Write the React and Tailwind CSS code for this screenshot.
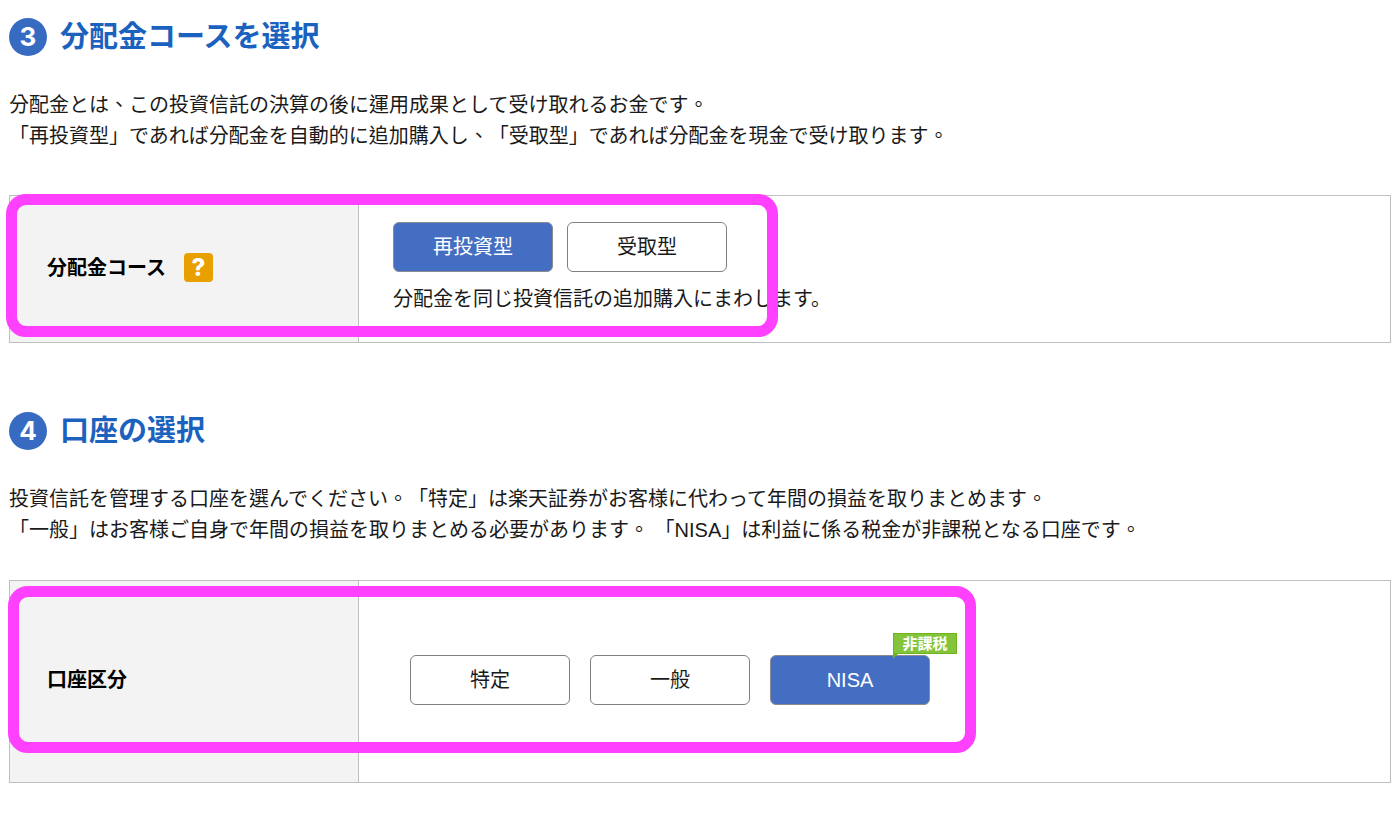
import React, { useState } from "react";

const jpFont = "font-['Liberation_Sans','Noto_Sans_CJK_JP',sans-serif]";
const tcFont = "font-['Liberation_Sans','Noto_Sans_CJK_TC',sans-serif]";

const StepHeading = ({ number, title }) => (
  <div className="flex items-center gap-[13px]">
    <span className="flex size-[38px] shrink-0 items-center justify-center rounded-full bg-[#376bc2] font-['Inter',sans-serif] text-[26px] font-bold leading-none text-white">
      {number}
    </span>
    <h2 className="text-[29px] leading-[38px] font-bold text-[#1b62bf]">{title}</h2>
  </div>
);

const Description = ({ children }) => (
  <p className={`mt-[34px] text-xl leading-[31px] [text-spacing-trim:space-all] ${tcFont}`}>
    {children}
  </p>
);

const OptionButton = ({ label, selected, onClick }) => (
  <button
    type="button"
    aria-pressed={selected}
    onClick={onClick}
    className={`h-[50px] w-40 rounded-md border text-xl cursor-pointer ${
      selected
        ? "border-[#8c8c90] bg-[#436ec2] text-white"
        : "border-[#808080] bg-white text-[#1a1a1a]"
    }`}
  >
    {label}
  </button>
);

const TaxFreeBadge = () => (
  <span className="absolute -top-[22px] left-[123px] h-[21px] w-16 border border-[#6fb41c] bg-[#84c43b] text-center text-[15px] leading-[19px] font-bold text-white">
    非課税
    <svg
      className="absolute -left-px top-[19px]"
      width="6"
      height="6"
      viewBox="0 0 6 6"
      aria-hidden="true"
    >
      <path d="M0 0H6L0 6Z" fill="#6fb41c" />
    </svg>
  </span>
);

const App = () => {
  const [course, setCourse] = useState("再投資型");
  const [account, setAccount] = useState("NISA");

  return (
    <main className={`px-[9px] pt-[18px] pb-8 text-[#1a1a1a] ${jpFont}`}>
      {/* Step 3 */}
      <section>
        <StepHeading number="3" title="分配金コースを選択" />
        <Description>
          分配金とは、この投資信託の決算の後に運用成果として受け取れるお金です。
          <br />
          「再投資型」であれば分配金を自動的に追加購入し、「受取型」であれば分配金を現金で受け取ります。
        </Description>

        <div className="relative mt-[43px]">
          <table className="w-full border-collapse border border-[#bfbfbf]">
            <tbody>
              <tr>
                <th
                  scope="row"
                  className="w-[349px] border-r border-[#bfbfbf] bg-[#f3f3f3] pb-[3px] pl-[37px] text-left text-xl font-bold text-black"
                >
                  <div className="flex items-center gap-[18px]">
                    分配金コース
                    <button
                      type="button"
                      className="flex size-[29px] items-center justify-center rounded-[4px] bg-[#e8a000] font-['Inter',sans-serif] text-2xl font-extrabold leading-none text-white cursor-pointer"
                    >
                      ?
                    </button>
                  </div>
                </th>
                <td className="pt-[26px] pr-8 pb-7 pl-[34px]">
                  <div className="flex flex-wrap gap-[14px]">
                    {["再投資型", "受取型"].map((label) => (
                      <OptionButton
                        key={label}
                        label={label}
                        selected={course === label}
                        onClick={() => setCourse(label)}
                      />
                    ))}
                  </div>
                  <p className="mt-3 text-xl leading-[30px]">
                    分配金を同じ投資信託の追加購入にまわします。
                  </p>
                </td>
              </tr>
            </tbody>
          </table>
          <div className="pointer-events-none absolute -top-px -left-[3px] h-[143px] w-[772px] rounded-[20px] border-[11px] border-[#ff40ff]" />
        </div>
      </section>

      {/* Step 4 */}
      <section className="mt-[69px]">
        <StepHeading number="4" title="口座の選択" />
        <Description>
          投資信託を管理する口座を選んでください。「特定」は楽天証券がお客様に代わって年間の損益を取りまとめます。
          <br />
          「一般」はお客様ご自身で年間の損益を取りまとめる必要があります。 「NISA」は利益に係る税金が非課税となる口座です。
        </Description>

        <div className="relative mt-[34px]">
          <table className="w-full border-collapse border border-[#bfbfbf]">
            <tbody>
              <tr>
                <th
                  scope="row"
                  className="w-[349px] border-r border-[#bfbfbf] bg-[#f3f3f3] pb-[3px] pl-[37px] text-left text-xl font-bold text-black"
                >
                  口座区分
                </th>
                <td className="pt-[74px] pr-8 pb-[77px] pl-[51px]">
                  <div className="flex flex-wrap gap-5">
                    {["特定", "一般", "NISA"].map((label) => (
                      <div key={label} className="relative">
                        <OptionButton
                          label={label}
                          selected={account === label}
                          onClick={() => setAccount(label)}
                        />
                        {label === "NISA" && <TaxFreeBadge />}
                      </div>
                    ))}
                  </div>
                </td>
              </tr>
            </tbody>
          </table>
          <div className="pointer-events-none absolute top-[6px] -left-px h-[167px] w-[968px] rounded-[20px] border-[11px] border-[#ff40ff]" />
        </div>
      </section>
    </main>
  );
};

export default App;
